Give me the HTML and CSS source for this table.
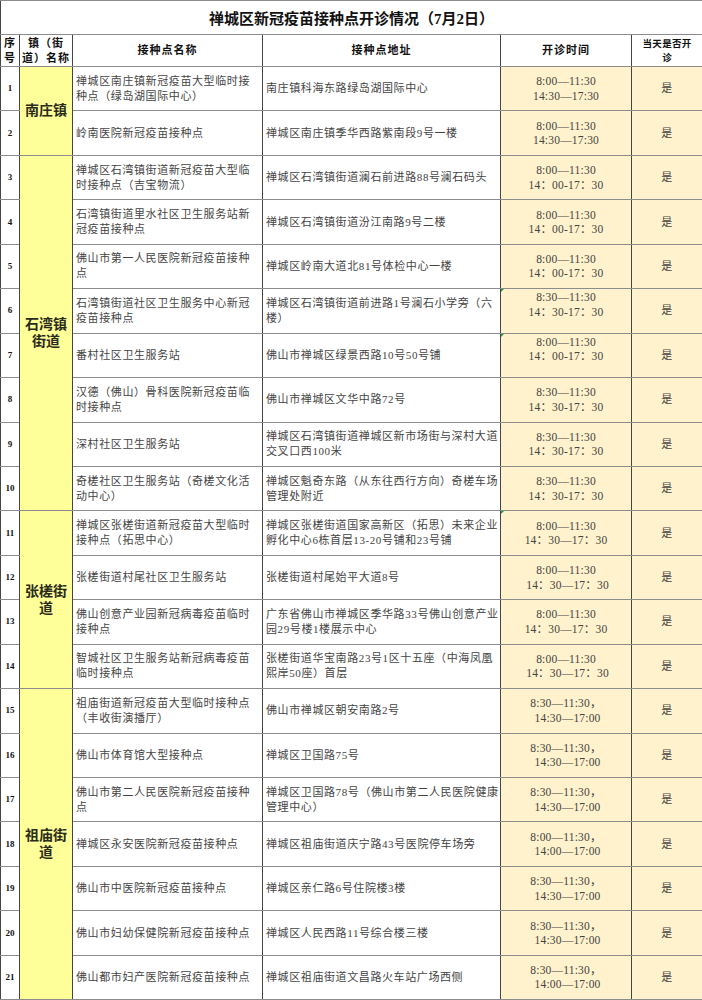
FILE: index.html
```html
<!DOCTYPE html>
<html lang="zh-CN">
<head>
<meta charset="utf-8">
<title>禅城区新冠疫苗接种点开诊情况（7月2日）</title>
<link rel="stylesheet" href="styles.css">
</head>
<body>
<table class="sheet">
  <colgroup>
    <col class="c-no"><col class="c-town"><col class="c-name"><col class="c-addr"><col class="c-time"><col class="c-open">
  </colgroup>
  <tr class="title-row"><td class="title" colspan="6">禅城区新冠疫苗接种点开诊情况（7月2日）</td></tr>
  <tr class="head-row">
    <th>序号</th>
    <th>镇（街道）名称</th>
    <th>接种点名称</th>
    <th>接种点地址</th>
    <th>开诊时间</th>
    <th class="small">当天是否开<br>诊</th>
  </tr>

  <tr class="row">
    <td class="no">1</td>
    <td class="town" rowspan="2">南庄镇</td>
    <td>禅城区南庄镇新冠疫苗大型临时接种点（绿岛湖国际中心）</td>
    <td class="addr">南庄镇科海东路绿岛湖国际中心</td>
    <td class="time">8:00—11:30<br>14:30—17:30</td>
    <td class="open">是</td>
  </tr>
  <tr class="row">
    <td class="no">2</td>
    <td>岭南医院新冠疫苗接种点</td>
    <td class="addr">禅城区南庄镇季华西路紫南段9号一楼</td>
    <td class="time">8:00—11:30<br>14:30—17:30</td>
    <td class="open">是</td>
  </tr>

  <tr class="row">
    <td class="no">3</td>
    <td class="town" rowspan="8">石湾镇街道</td>
    <td>禅城区石湾镇街道新冠疫苗大型临时接种点（吉宝物流）</td>
    <td class="addr">禅城区石湾镇街道澜石前进路88号澜石码头</td>
    <td class="time">8:00—11:30<br>14：00-17：30</td>
    <td class="open">是</td>
  </tr>
  <tr class="row">
    <td class="no">4</td>
    <td>石湾镇街道里水社区卫生服务站新冠疫苗接种点</td>
    <td class="addr">禅城区石湾镇街道汾江南路9号二楼</td>
    <td class="time">8:00—11:30<br>14：00-17：30</td>
    <td class="open">是</td>
  </tr>
  <tr class="row">
    <td class="no">5</td>
    <td>佛山市第一人民医院新冠疫苗接种点</td>
    <td class="addr">禅城区岭南大道北81号体检中心一楼</td>
    <td class="time">8:00—11:30<br>14：00-17：30</td>
    <td class="open">是</td>
  </tr>
  <tr class="row">
    <td class="no">6</td>
    <td>石湾镇街道社区卫生服务中心新冠疫苗接种点</td>
    <td class="addr">禅城区石湾镇街道前进路1号澜石小学旁（六楼）</td>
    <td class="time raise flag">8:30—11:30<br>14：30-17：30</td>
    <td class="open">是</td>
  </tr>
  <tr class="row">
    <td class="no">7</td>
    <td>番村社区卫生服务站</td>
    <td class="addr">佛山市禅城区绿景西路10号50号铺</td>
    <td class="time raise flag">8:00—11:30<br>14：00-17：30</td>
    <td class="open">是</td>
  </tr>
  <tr class="row">
    <td class="no">8</td>
    <td>汉德（佛山）骨科医院新冠疫苗临时接种点</td>
    <td class="addr">佛山市禅城区文华中路72号</td>
    <td class="time">8:30—11:30<br>14：30-17：30</td>
    <td class="open">是</td>
  </tr>
  <tr class="row">
    <td class="no">9</td>
    <td>深村社区卫生服务站</td>
    <td class="addr">禅城区石湾镇街道禅城区新市场街与深村大道交叉口西100米</td>
    <td class="time">8:30—11:30<br>14：30-17：30</td>
    <td class="open">是</td>
  </tr>
  <tr class="row">
    <td class="no">10</td>
    <td>奇槎社区卫生服务站（奇槎文化活动中心）</td>
    <td class="addr">禅城区魁奇东路（从东往西行方向）奇槎车场管理处附近</td>
    <td class="time">8:30—11:30<br>14：30-17：30</td>
    <td class="open">是</td>
  </tr>

  <tr class="row">
    <td class="no">11</td>
    <td class="town" rowspan="4">张槎街道</td>
    <td>禅城区张槎街道新冠疫苗大型临时接种点（拓思中心）</td>
    <td class="addr">禅城区张槎街道国家高新区（拓思）未来企业孵化中心6栋首层13-20号铺和23号铺</td>
    <td class="time flag">8:00—11:30<br>14：30—17：30</td>
    <td class="open">是</td>
  </tr>
  <tr class="row">
    <td class="no">12</td>
    <td>张槎街道村尾社区卫生服务站</td>
    <td class="addr">张槎街道村尾始平大道8号</td>
    <td class="time">8:00—11:30<br>&nbsp;14：30—17：30</td>
    <td class="open">是</td>
  </tr>
  <tr class="row">
    <td class="no">13</td>
    <td>佛山创意产业园新冠病毒疫苗临时接种点</td>
    <td class="addr">广东省佛山市禅城区季华路33号佛山创意产业园29号楼1楼展示中心</td>
    <td class="time">8:00—11:30<br>14：30—17：30</td>
    <td class="open">是</td>
  </tr>
  <tr class="row">
    <td class="no">14</td>
    <td>智城社区卫生服务站新冠病毒疫苗临时接种点</td>
    <td class="addr">张槎街道华宝南路23号1区十五座（中海凤凰熙岸50座）首层</td>
    <td class="time">8:00—11:30<br>&nbsp;14：30—17：30</td>
    <td class="open">是</td>
  </tr>

  <tr class="row">
    <td class="no">15</td>
    <td class="town" rowspan="7">祖庙街道</td>
    <td>祖庙街道新冠疫苗大型临时接种点（丰收街演播厅）</td>
    <td class="addr">佛山市禅城区朝安南路2号</td>
    <td class="time">8:30—11:30，<br>&nbsp;14:30—17:00</td>
    <td class="open">是</td>
  </tr>
  <tr class="row">
    <td class="no">16</td>
    <td>佛山市体育馆大型接种点</td>
    <td class="addr">禅城区卫国路75号</td>
    <td class="time">8:30—11:30，<br>&nbsp;14:30—17:00</td>
    <td class="open">是</td>
  </tr>
  <tr class="row">
    <td class="no">17</td>
    <td>佛山市第二人民医院新冠疫苗接种点</td>
    <td class="addr">禅城区卫国路78号（佛山市第二人民医院健康管理中心）</td>
    <td class="time">8:30—11:30，<br>&nbsp;14:30—17:00</td>
    <td class="open">是</td>
  </tr>
  <tr class="row">
    <td class="no">18</td>
    <td>禅城区永安医院新冠疫苗接种点</td>
    <td class="addr">禅城区祖庙街道庆宁路43号医院停车场旁</td>
    <td class="time">8:00—11:30，<br>&nbsp;14:00—17:00</td>
    <td class="open">是</td>
  </tr>
  <tr class="row">
    <td class="no">19</td>
    <td>佛山市中医院新冠疫苗接种点</td>
    <td class="addr">禅城区亲仁路6号住院楼3楼</td>
    <td class="time">8:30—11:30，<br>&nbsp;14:30—17:00</td>
    <td class="open">是</td>
  </tr>
  <tr class="row">
    <td class="no">20</td>
    <td>佛山市妇幼保健院新冠疫苗接种点</td>
    <td class="addr">禅城区人民西路11号综合楼三楼</td>
    <td class="time">8:30—11:30，<br>&nbsp;14:30—17:00</td>
    <td class="open">是</td>
  </tr>
  <tr class="row">
    <td class="no">21</td>
    <td>佛山都市妇产医院新冠疫苗接种点</td>
    <td class="addr">禅城区祖庙街道文昌路火车站广场西侧</td>
    <td class="time">8:30—11:30，<br>&nbsp;14:00—17:00</td>
    <td class="open">是</td>
  </tr>
</table>
</body>
</html>
```
FILE: styles.css
```css
html, body {
  margin: 0;
  padding: 0;
  background: #ffffff;
}

body {
  font-family: "Liberation Serif", "Noto Sans CJK SC", serif;
  color: #444444;
}

.sheet {
  width: 702px;
  border-collapse: collapse;
  table-layout: fixed;
}

.c-no { width: 19px; }
.c-town { width: 53px; }
.c-name { width: 190px; }
.c-addr { width: 238px; }
.c-time { width: 131px; }
.c-open { width: 71px; }

.sheet td,
.sheet th {
  border-left: 1px solid #454545;
  border-right: 1px solid #454545;
  border-top: 1px solid #8c8c8c;
  border-bottom: 1px solid #8c8c8c;
  padding: 0 3px;
  font-size: 11px;
  letter-spacing: 0.6px;
  line-height: 15px;
  vertical-align: middle;
  text-align: left;
  font-weight: normal;
  overflow: hidden;
}

.sheet .addr {
  padding-right: 0;
}

.title-row { height: 34px; }

.sheet .title {
  font-size: 15px;
  font-weight: bold;
  letter-spacing: 0;
  color: #111111;
  text-align: center;
  line-height: 20px;
  padding-top: 2px;
}

.head-row { height: 32px; }

.sheet th {
  font-weight: bold;
  color: #111111;
  text-align: center;
  letter-spacing: 1px;
  line-height: 15px;
  padding: 0;
}

.sheet th.small {
  font-size: 9.5px;
  letter-spacing: 0.3px;
  line-height: 14px;
}

.row { height: 44.45px; }

.sheet .no {
  font-size: 9px;
  font-weight: bold;
  color: #111111;
  text-align: center;
  letter-spacing: 0;
  padding: 0;
}

.sheet .town {
  background: #ffff99;
  font-size: 14px;
  font-weight: bold;
  color: #2a2a1a;
  text-align: center;
  letter-spacing: 0;
  line-height: 17px;
  padding: 0 2px;
}

.sheet .time {
  background: #fff2cc;
  text-align: center;
  font-size: 11.5px;
  letter-spacing: 0.2px;
  line-height: 14.5px;
  white-space: nowrap;
}

.sheet .time.raise {
  padding-bottom: 12px;
}

.sheet .open {
  background: #fff2cc;
  text-align: center;
}

.flag {
  position: relative;
}

.flag::before {
  content: "";
  position: absolute;
  left: 0;
  top: 0;
  border-top: 3px solid #1f9d3b;
  border-right: 3px solid transparent;
}
```
